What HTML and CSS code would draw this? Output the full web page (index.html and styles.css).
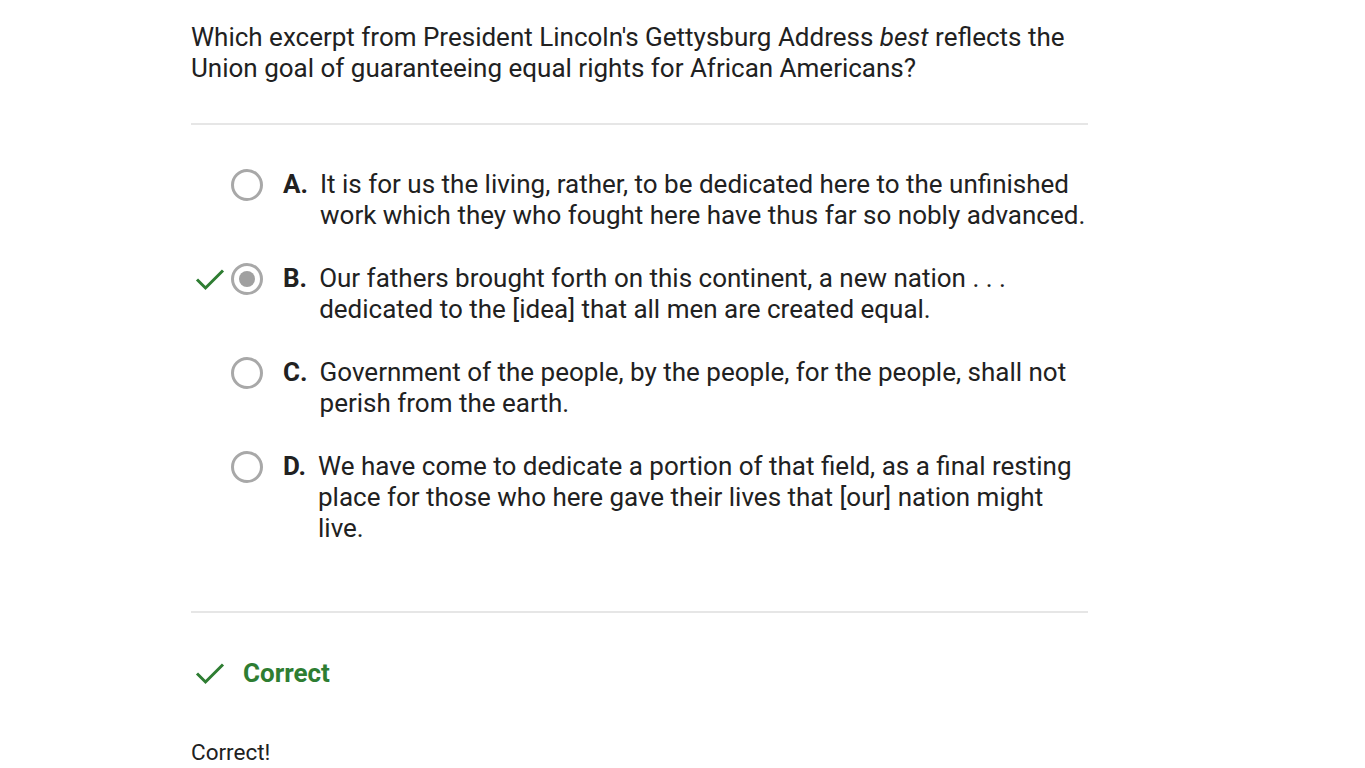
FILE: index.html
```html
<!DOCTYPE html>
<html>
<head>
<meta charset="utf-8">
<link rel="stylesheet" href="styles.css">
</head>
<body>
<main class="quiz">
  <p class="question">Which excerpt from President Lincoln's Gettysburg Address <em>best</em> reflects the Union goal of guaranteeing equal rights for African Americans?</p>
  <hr class="divider">
  <ul class="options">
    <li class="option">
      <span class="mark"></span>
      <span class="radio"></span>
      <span class="letter">A.</span>
      <span class="text">It is for us the living, rather, to be dedicated here to the unfinished work which they who fought here have thus far so nobly advanced.</span>
    </li>
    <li class="option">
      <span class="mark"><svg viewBox="0 0 30 30" width="30" height="30"><path d="M2 15.5 L10.5 24 L28 6.5" fill="none" stroke="#2e7d32" stroke-width="3"/></svg></span>
      <span class="radio selected"><span class="dot"></span></span>
      <span class="letter">B.</span>
      <span class="text">Our fathers brought forth on this continent, a new nation . . . dedicated to the [idea] that all men are created equal.</span>
    </li>
    <li class="option">
      <span class="mark"></span>
      <span class="radio"></span>
      <span class="letter">C.</span>
      <span class="text">Government of the people, by the people, for the people, shall not perish from the earth.</span>
    </li>
    <li class="option">
      <span class="mark"></span>
      <span class="radio"></span>
      <span class="letter">D.</span>
      <span class="text">We have come to dedicate a portion of that field, as a final resting place for those who here gave their lives that [our] nation might live.</span>
    </li>
  </ul>
  <hr class="divider lower">
  <div class="result">
    <span class="mark"><svg viewBox="0 0 30 30" width="30" height="30"><path d="M2 15.5 L10.5 24 L28 6.5" fill="none" stroke="#2e7d32" stroke-width="3"/></svg></span>
    <span class="result-title">Correct</span>
  </div>
  <p class="feedback">Correct!</p>
</main>
</body>
</html>
```
FILE: styles.css
```css
html, body {
  margin: 0;
  padding: 0;
  background: #fff;
}
body {
  font-family: Roboto, "Liberation Sans", sans-serif;
  color: #212121;
}
.quiz {
  width: 897px;
  margin-left: 191px;
  padding-top: 22px;
}
.question {
  margin: 0;
  font-size: 26px;
  line-height: 31px;
  width: 890px;
}
.question em {
  font-style: italic;
}
.divider {
  border: 0;
  border-top: 2px solid #e6e6e6;
  margin: 39px 0 0 0;
  height: 0;
}
.options {
  list-style: none;
  margin: 0;
  padding: 44px 0 0 0;
}
.option {
  display: flex;
  align-items: flex-start;
  font-size: 26px;
  line-height: 31px;
  margin-bottom: 32px;
}
.option:last-child {
  margin-bottom: 0;
}
.mark {
  width: 34px;
  height: 31px;
  flex: none;
  display: flex;
  align-items: center;
  justify-content: flex-end;
}
.radio {
  flex: none;
  box-sizing: border-box;
  width: 32px;
  height: 32px;
  border: 3px solid #a8a8a8;
  border-radius: 50%;
  margin-left: 6px;
  display: flex;
  align-items: center;
  justify-content: center;
}
.dot {
  width: 16px;
  height: 16px;
  border-radius: 50%;
  background: #a0a0a0;
}
.letter {
  flex: none;
  font-weight: 700;
  margin-left: 20px;
  margin-right: 12px;
}
.text {
  flex: 1;
}
.divider.lower {
  margin-top: 67px;
}
.result {
  display: flex;
  align-items: center;
  margin-top: 44px;
  height: 32px;
}
.result .mark {
  height: 32px;
}
.result-title {
  margin-left: 18px;
  font-size: 26px;
  font-weight: 700;
  color: #2e7d32;
}
.feedback {
  margin: 49px 0 0 0;
  font-size: 22.5px;
  line-height: 28px;
}
```
